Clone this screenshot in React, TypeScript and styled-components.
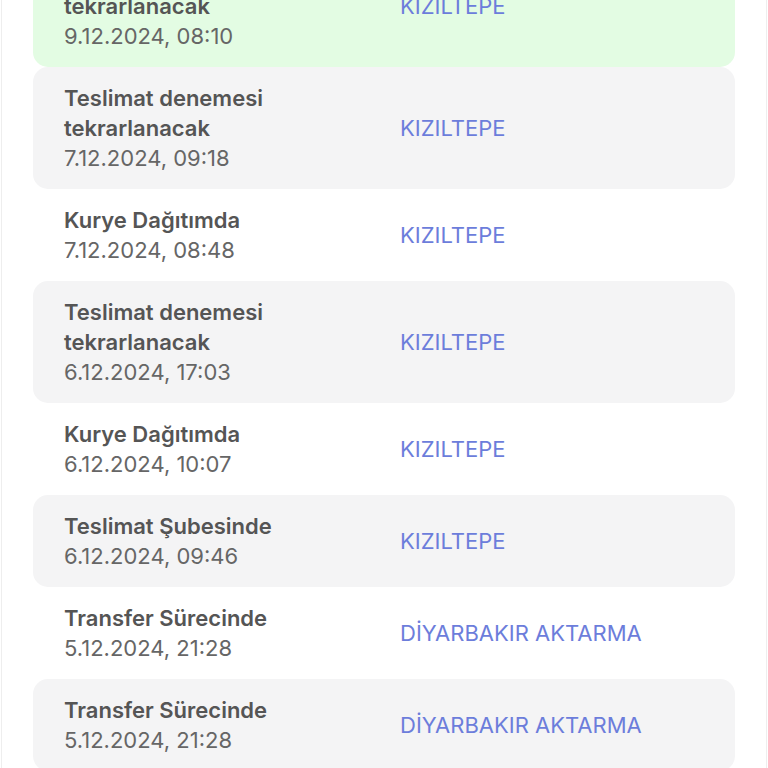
import React from 'react'
import styled, { createGlobalStyle } from 'styled-components'

const GlobalStyle = createGlobalStyle`
	html, body {
		margin: 0;
		padding: 0;
		background: #ffffff;
		overflow: hidden;
	}
	body {
		font-family: Inter, "Noto Sans", "DejaVu Sans", sans-serif;
	}
`

type Tone = 'current' | 'shaded' | 'plain'

type Movement = {
	status: string[]
	date: string
	place: string
	tone: Tone
}

const MOVEMENTS: Movement[] = [
	{ status: ['Teslimat denemesi', 'tekrarlanacak'], date: '9.12.2024, 08:10', place: 'KIZILTEPE', tone: 'current' },
	{ status: ['Teslimat denemesi', 'tekrarlanacak'], date: '7.12.2024, 09:18', place: 'KIZILTEPE', tone: 'shaded' },
	{ status: ['Kurye Dağıtımda'], date: '7.12.2024, 08:48', place: 'KIZILTEPE', tone: 'plain' },
	{ status: ['Teslimat denemesi', 'tekrarlanacak'], date: '6.12.2024, 17:03', place: 'KIZILTEPE', tone: 'shaded' },
	{ status: ['Kurye Dağıtımda'], date: '6.12.2024, 10:07', place: 'KIZILTEPE', tone: 'plain' },
	{ status: ['Teslimat Şubesinde'], date: '6.12.2024, 09:46', place: 'KIZILTEPE', tone: 'shaded' },
	{ status: ['Transfer Sürecinde'], date: '5.12.2024, 21:28', place: 'DİYARBAKIR AKTARMA', tone: 'plain' },
	{ status: ['Transfer Sürecinde'], date: '5.12.2024, 21:28', place: 'DİYARBAKIR AKTARMA', tone: 'shaded' },
]

const TONE_BG: Record<Tone, string> = {
	current: '#e3fce3',
	shaded: '#f4f4f5',
	plain: '#ffffff',
}

export default function App() {
	return (
		<>
			<GlobalStyle />
			<Frame>
				<List>
					{MOVEMENTS.map((m, i) => (
						<Row key={i} $tone={m.tone}>
							<Info>
								<Status>
									{m.status.map((line, j) => (
										<span key={j}>{line}</span>
									))}
								</Status>
								<Stamp>{m.date}</Stamp>
							</Info>
							<Place>{m.place}</Place>
						</Row>
					))}
				</List>
			</Frame>
		</>
	)
}

const Frame = styled.div`
	height: 768px;
	margin: 0 1px;
	padding: 0 31px;
	border-left: 1px solid #eeeeee;
	border-right: 1px solid #eeeeee;
	overflow: hidden;
`

// list is scrolled a little, so the first entry is cut at the top
const List = styled.div`
	display: flex;
	flex-direction: column;
	margin-top: -55px;
`

const Row = styled.div<{ $tone: Tone }>`
	display: grid;
	grid-template-columns: 336px 1fr;
	align-items: center;
	padding: 16px 31px;
	border-radius: 15px;
	background: ${(p) => TONE_BG[p.$tone]};
`

const Info = styled.div`
	display: flex;
	flex-direction: column;
`

const Status = styled.div`
	display: flex;
	flex-direction: column;
	font-size: 22px;
	line-height: 30px;
	font-weight: 600;
	color: #555555;
`

const Stamp = styled.div`
	font-size: 22px;
	line-height: 30px;
	font-weight: 400;
	color: #666666;
`

const Place = styled.div`
	font-size: 22px;
	line-height: 30px;
	font-weight: 400;
	color: #6c7ddb;
`
